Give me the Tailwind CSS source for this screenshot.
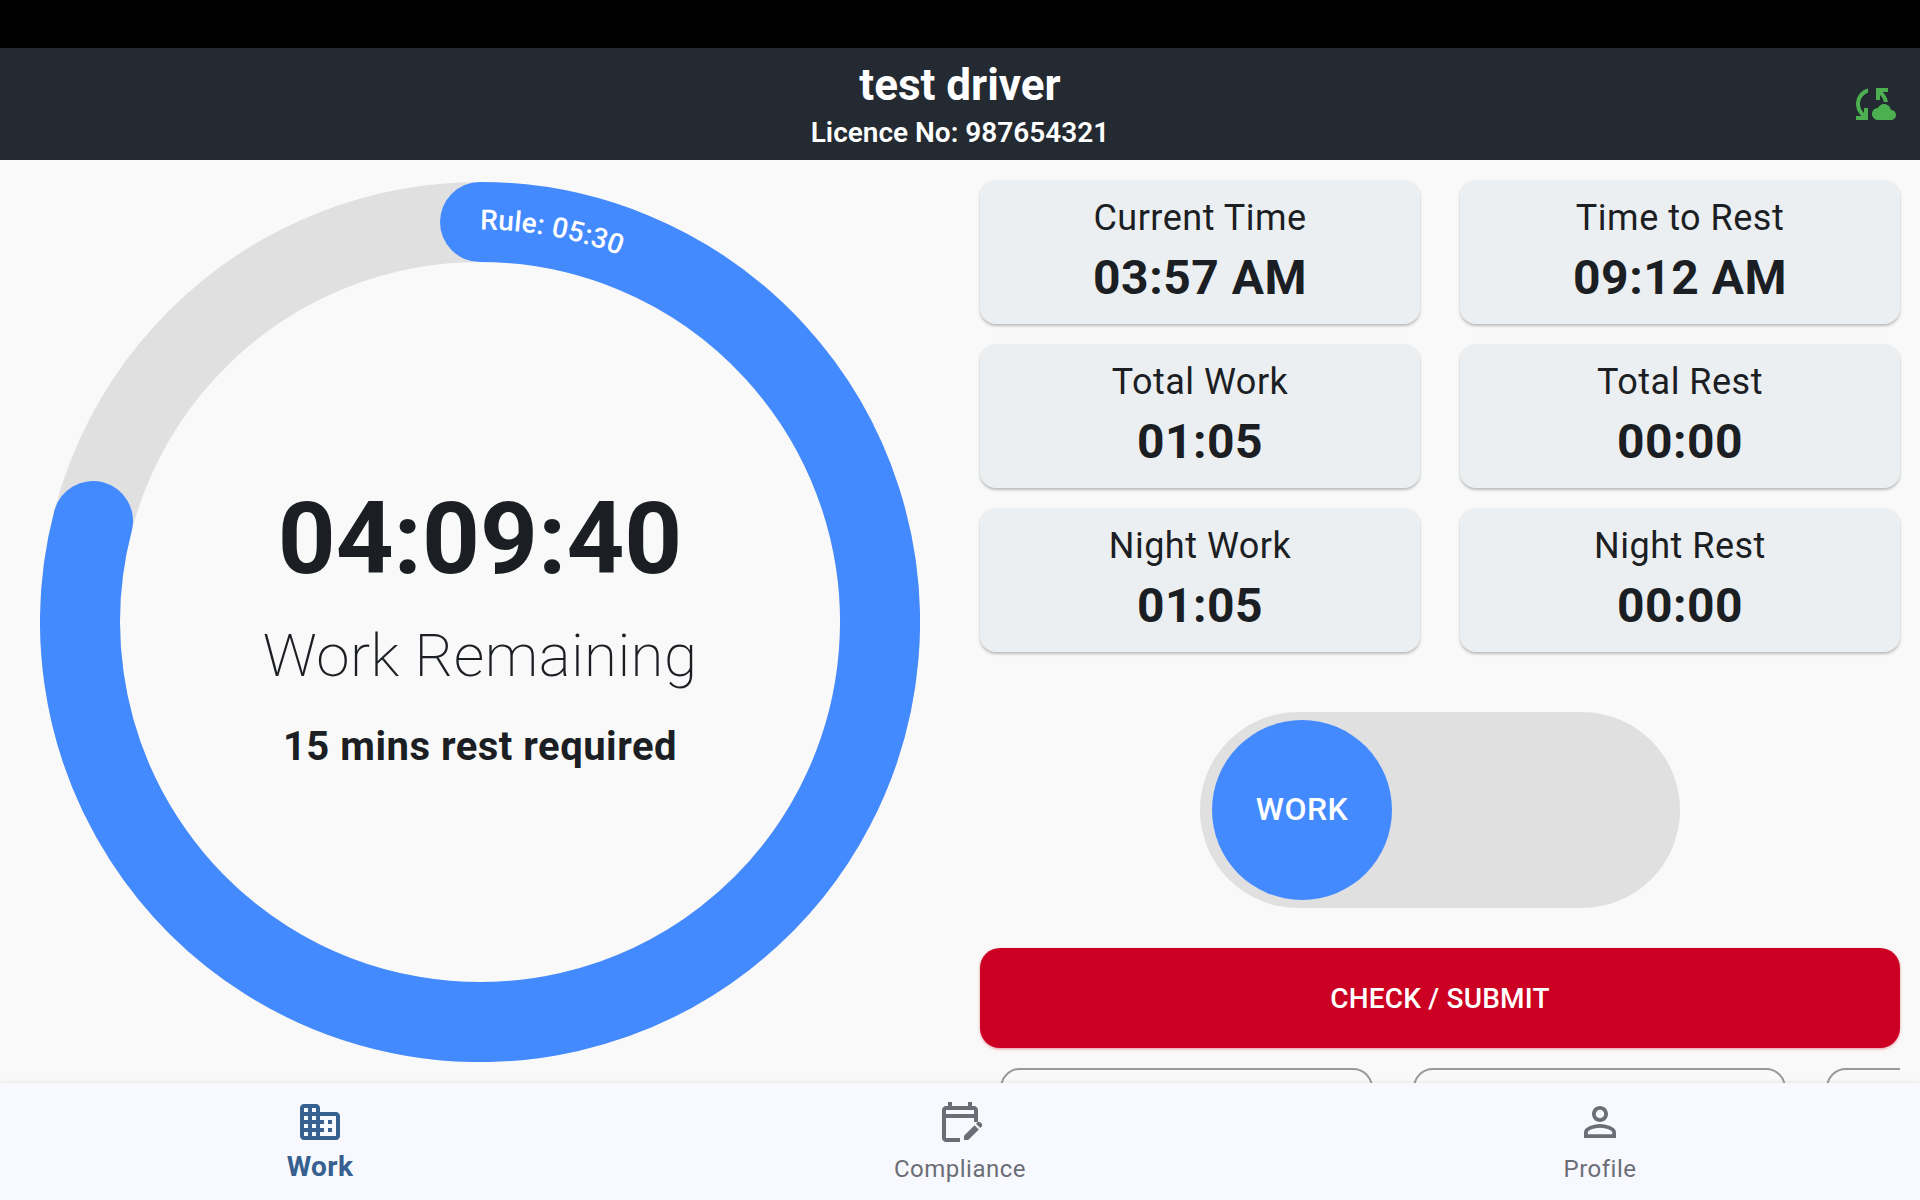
<!DOCTYPE html>
<html lang="en">
<head>
<meta charset="utf-8">
<title>Work</title>
<script src="https://cdn.jsdelivr.net/npm/@tailwindcss/browser@4"></script>
</head>
<body class="font-['Roboto',sans-serif] bg-[#f9f9f9] text-[#1b1e23]">
<div class="w-[1920px] h-[1200px] flex flex-col overflow-hidden">
    <div class="h-12 bg-black shrink-0"></div>

    <header class="relative h-28 shrink-0 bg-[#232a32] text-white flex flex-col items-center">
        <h1 class="text-[44px] leading-[48px] font-bold mt-[13px]">test driver</h1>
        <p class="text-[28px] leading-[32px] font-semibold mt-[8px]">Licence No: 987654321</p>
        <svg class="absolute right-6 top-8 w-12 h-12 text-[#4caf50]" viewBox="0 0 24 24" fill="currentColor">
            <path d="M21.5 14.98c-.02 0-.03 0-.05.01C21.2 13.3 19.76 12 18 12c-1.4 0-2.6.83-3.16 2.02C13.26 14.1 12 15.4 12 17c0 1.66 1.34 3 3 3l6.5-.02c1.38 0 2.5-1.12 2.5-2.5s-1.12-2.5-2.5-2.5zM10 4.26v2.09C7.67 7.18 6 9.39 6 12c0 1.77.78 3.34 2 4.44V14h2v6H4v-2h2.73C5.06 16.54 4 14.4 4 12c0-3.73 2.55-6.85 6-7.74zM20 6h-2.73c1.43 1.26 2.41 3.01 2.66 5h-2.02C17.68 9.64 16.98 8.45 16 7.56V10h-2V4h6v2z"/>
        </svg>
    </header>

    <main class="flex-1 min-h-0 flex overflow-hidden">
        <!-- ring -->
        <section class="w-[960px] shrink-0 pl-10 pt-[22px]">
            <div class="relative w-[880px] h-[880px] flex flex-col items-center">
                <svg class="absolute inset-0" width="880" height="880" viewBox="0 0 880 880">
                    <circle cx="440" cy="440" r="400" fill="none" stroke="#e0e0e0" stroke-width="80"/>
                    <path d="M440 40 A400 400 0 1 1 53 339" fill="none" stroke="#448aff" stroke-width="80" stroke-linecap="round"/>
                    <path id="ruleArc" d="M440 47.500 A392.500 392.500 0 0 1 832.500 440" fill="none"/>
                    <text fill="#fff" font-size="28" font-weight="500" letter-spacing="0.2">
                        <textPath href="#ruleArc">Rule: 05:30</textPath>
                    </text>
                </svg>
                <div class="relative flex flex-col items-center">
                    <div class="text-[101px] leading-[112px] font-bold mt-[301px]">04:09:40</div>
                    <div class="text-[60px] leading-[70px] font-extralight tracking-[0.4px] mt-[26px]">Work Remaining</div>
                    <div class="text-[40px] leading-[48px] font-bold tracking-[0.5px] mt-[32px]">15 mins rest required</div>
                </div>
            </div>
        </section>

        <!-- stats and actions -->
        <section class="w-[960px] shrink-0 pl-5 pr-5 pt-5">
            <div class="grid grid-cols-2 gap-x-10 gap-y-5">
                <div class="h-36 rounded-2xl bg-[#eceff1] shadow-[0_2px_3px_rgba(0,0,0,0.25)] flex flex-col items-center pt-[16px]">
                    <div class="text-[36px] leading-[44px] tracking-[0.5px]">Current Time</div>
                    <div class="text-[48px] leading-[56px] font-bold tracking-[0.5px] mt-[10px]">03:57 AM</div>
                </div>
                <div class="h-36 rounded-2xl bg-[#eceff1] shadow-[0_2px_3px_rgba(0,0,0,0.25)] flex flex-col items-center pt-[16px]">
                    <div class="text-[36px] leading-[44px] tracking-[0.5px]">Time to Rest</div>
                    <div class="text-[48px] leading-[56px] font-bold tracking-[0.5px] mt-[10px]">09:12 AM</div>
                </div>
                <div class="h-36 rounded-2xl bg-[#eceff1] shadow-[0_2px_3px_rgba(0,0,0,0.25)] flex flex-col items-center pt-[16px]">
                    <div class="text-[36px] leading-[44px] tracking-[0.5px]">Total Work</div>
                    <div class="text-[48px] leading-[56px] font-bold tracking-[0.5px] mt-[10px]">01:05</div>
                </div>
                <div class="h-36 rounded-2xl bg-[#eceff1] shadow-[0_2px_3px_rgba(0,0,0,0.25)] flex flex-col items-center pt-[16px]">
                    <div class="text-[36px] leading-[44px] tracking-[0.5px]">Total Rest</div>
                    <div class="text-[48px] leading-[56px] font-bold tracking-[0.5px] mt-[10px]">00:00</div>
                </div>
                <div class="h-36 rounded-2xl bg-[#eceff1] shadow-[0_2px_3px_rgba(0,0,0,0.25)] flex flex-col items-center pt-[16px]">
                    <div class="text-[36px] leading-[44px] tracking-[0.5px]">Night Work</div>
                    <div class="text-[48px] leading-[56px] font-bold tracking-[0.5px] mt-[10px]">01:05</div>
                </div>
                <div class="h-36 rounded-2xl bg-[#eceff1] shadow-[0_2px_3px_rgba(0,0,0,0.25)] flex flex-col items-center pt-[16px]">
                    <div class="text-[36px] leading-[44px] tracking-[0.5px]">Night Rest</div>
                    <div class="text-[48px] leading-[56px] font-bold tracking-[0.5px] mt-[10px]">00:00</div>
                </div>
            </div>

            <div class="mt-[60px] mx-auto w-[480px] h-[196px] rounded-full bg-[#e0e0e0] flex items-center pl-3">
                <div class="w-[180px] h-[180px] rounded-full bg-[#448aff] text-white text-[32px] tracking-[0.5px] font-medium flex items-center justify-center pb-[2px]">WORK</div>
            </div>

            <button class="mt-10 w-full h-[100px] rounded-[20px] bg-[#cc0022] text-white text-[28px] tracking-[0.2px] font-medium pt-[1px] shadow-[0_1px_3px_rgba(204,0,34,0.4)]">CHECK / SUBMIT</button>

            <div class="mt-5 h-[100px] flex gap-10 pl-5 overflow-hidden">
                <div class="w-[373px] shrink-0 rounded-[20px] border-2 border-[#999999]"></div>
                <div class="w-[373px] shrink-0 rounded-[20px] border-2 border-[#999999]"></div>
                <div class="w-[373px] shrink-0 rounded-[20px] border-2 border-[#999999]"></div>
            </div>
        </section>
    </main>

    <nav class="relative h-[117px] shrink-0 bg-[#f8f9fe] shadow-[0_-1px_4px_rgba(0,0,0,0.08)] grid grid-cols-3">
        <a class="flex flex-col items-center pt-[15px] text-[#35608f]">
            <svg class="w-12 h-12" viewBox="0 0 24 24" fill="currentColor">
                <path d="M12 7V5c0-1.100-.9-2-2-2H4c-1.100 0-2 .9-2 2v14c0 1.100.9 2 2 2h16c1.100 0 2-.9 2-2V9c0-1.100-.9-2-2-2h-8zM6 19H4v-2h2v2zm0-4H4v-2h2v2zm0-4H4V9h2v2zm0-4H4V5h2v2zm4 12H8v-2h2v2zm0-4H8v-2h2v2zm0-4H8V9h2v2zm0-4H8V5h2v2zm10 12h-8v-2h2v-2h-2v-2h2v-2h-2V9h8v10zm-2-8h-2v2h2v-2zm0 4h-2v2h2v-2z"/>
            </svg>
            <span class="text-[28px] leading-[32px] font-bold tracking-[0.4px] mt-[5px]">Work</span>
        </a>
        <a class="flex flex-col items-center pt-[15px] text-[#6b6e76]">
            <svg class="w-12 h-12" viewBox="0 0 24 24" fill="currentColor">
                <path d="M5 10h14v2h2V6c0-1.100-.9-2-2-2h-1V2h-2v2H8V2H6v2H5c-1.100 0-2 .9-2 2v14c0 1.100.9 2 2 2h7v-2H5V10zm0-4h14v2H5V6zm17.840 8.280l-.71.71-2.120-2.120.71-.71c.39-.39 1.020-.39 1.410 0l.71.71c.39.39.39 1.020 0 1.410zm-3.540-.7l2.120 2.120-5.300 5.300H14v-2.120l5.300-5.300z"/>
            </svg>
            <span class="text-[24px] leading-[32px] tracking-[0.5px] mt-[7px]">Compliance</span>
        </a>
        <a class="flex flex-col items-center pt-[15px] text-[#6b6e76]">
            <svg class="w-12 h-12" viewBox="0 0 24 24" fill="currentColor">
                <path d="M12 5.900c1.160 0 2.100.94 2.100 2.100s-.94 2.100-2.100 2.100S9.900 9.160 9.900 8s.94-2.100 2.100-2.100m0 9c2.970 0 6.100 1.460 6.100 2.100v1.100H5.900V17c0-.64 3.130-2.100 6.100-2.100M12 4C9.790 4 8 5.790 8 8s1.790 4 4 4 4-1.790 4-4-1.790-4-4-4zm0 9c-2.670 0-8 1.340-8 4v3h16v-3c0-2.660-5.330-4-8-4z"/>
            </svg>
            <span class="text-[24px] leading-[32px] tracking-[0.5px] mt-[7px]">Profile</span>
        </a>
    </nav>
</div>
</body>
</html>
